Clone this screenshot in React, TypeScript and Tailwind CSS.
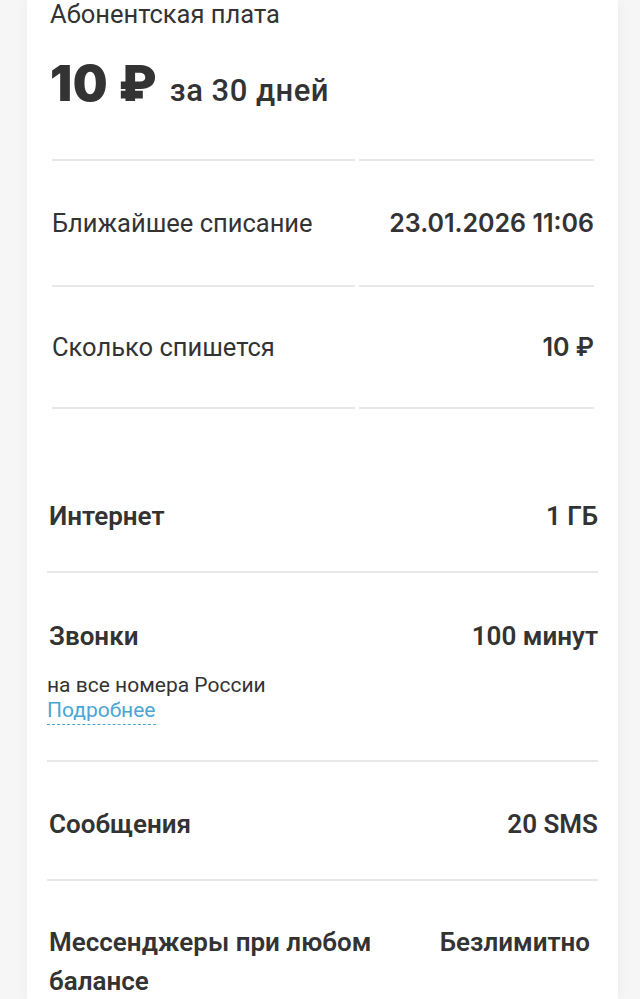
import React from "react";

const F = { fontFamily: "Roboto, 'Noto Sans', sans-serif" };

function TableRow({ label, value, last, h }: { label: string; value: string; last?: boolean; h: string }) {
  return (
    <div className="flex gap-[4px]">
      <div className={`w-[303px] border-t-2 border-[#e8e8e8] flex items-center ${h} ${last ? "border-b-2" : ""}`}>
        <span className="text-[25.5px] leading-[32px] text-[#333]">{label}</span>
      </div>
      <div className={`w-[235px] border-t-2 border-[#e8e8e8] flex items-center justify-end ${h} ${last ? "border-b-2" : ""}`}>
        <span className="text-[25px] leading-[32px] text-[#333] font-semibold" style={{ fontFamily: "Inter, sans-serif" }}>{value}</span>
      </div>
    </div>
  );
}

const title = "text-[26px] leading-[32px] font-semibold text-[#333]";

export default function App() {
  return (
    <div className="min-h-[999px] bg-[#f6f6f6] overflow-hidden" style={F}>
      <div className="ml-[27px] w-[591px] bg-white h-[999px] shadow-[0_0_12px_rgba(0,0,0,0.05)]">
        <div className="pl-[23px]">
          <div className="text-[25.5px] leading-[28px] text-[#333]">Абонентская плата</div>
          <div className="flex items-baseline mt-[28px] gap-[13px] h-[60px]">
            <span className="text-[49px] leading-[56px] font-black text-[#333] tracking-[0.5px]" style={{ fontFamily: "Inter, sans-serif" }}>10 ₽</span>
            <span className="text-[31px] leading-[32px] font-medium text-[#333] tracking-[0.5px]">за 30 дней</span>
          </div>
        </div>
        <div className="ml-[25px] mt-[43px] w-[542px]">
          <TableRow label="Ближайшее списание" value="23.01.2026 11:06" h="h-[126px]" />
          <TableRow label="Сколько спишется" value="10 ₽" h="h-[124px]" last />
        </div>
        <div className="ml-[20px] w-[551px] pt-[44px]">
          <div className="flex justify-between pt-[47px] pb-[39px] border-b-2 border-[#e8e8e8]">
            <span className={`${title} pl-[2px]`}>Интернет</span>
            <span className={title}>1 ГБ</span>
          </div>
          <div className="pt-[47px] pb-[35px] border-b-2 border-[#e8e8e8]">
            <div className="flex justify-between">
              <span className={`${title} pl-[2px]`}>Звонки</span>
              <span className={title}>100 минут</span>
            </div>
            <div className="mt-[21px] text-[21px] leading-[24px] text-[#333]">на все номера России</div>
            <div className="text-[21px] leading-[26px] text-[#4ba6d2] flex">
              <span className="border-b border-dashed border-[#4ba6d2] leading-[26px] pb-[1px]">Подробнее</span>
            </div>
          </div>
          <div className="flex justify-between pt-[46px] pb-[39px] border-b-2 border-[#e8e8e8]">
            <span className={`${title} pl-[2px]`}>Сообщения</span>
            <span className={title}>20 SMS</span>
          </div>
          <div className="flex justify-between pt-[42px]">
            <span className={`${title} leading-[39px] pl-[2px] w-[360px]`}>Мессенджеры при любом балансе</span>
            <span className={`${title} leading-[39px] pr-[8px]`}>Безлимитно</span>
          </div>
        </div>
      </div>
    </div>
  );
}
